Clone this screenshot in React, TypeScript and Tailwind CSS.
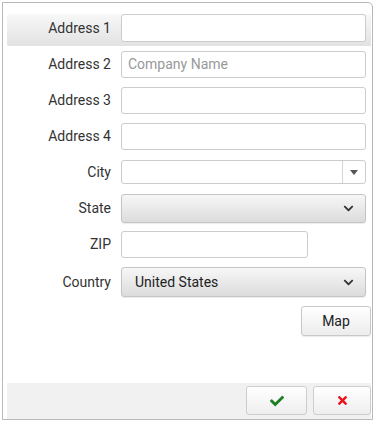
import React from "react";
import { FaCheck, FaTimes, FaChevronDown } from "react-icons/fa";

const font = { fontFamily: "Roboto, 'Liberation Sans', sans-serif" };

function Label({ children }: { children: React.ReactNode }) {
  return (
    <div className="w-[104px] shrink-0 text-right text-[14px] text-[#333] leading-none">{children}</div>
  );
}

function TextInput({ w = "w-[245px]", h = "h-[27px]", placeholder }: { w?: string; h?: string; placeholder?: string }) {
  return (
    <div className={`${w} ${h} ml-[10px] rounded-[3px] border border-[#cccccc] bg-white flex items-center px-[6px] text-[14px] text-[#999]`}>
      {placeholder}
    </div>
  );
}

function Select({ h, value }: { h: string; value?: string }) {
  return (
    <div
      className={`w-[245px] ${h} ml-[10px] rounded-[3px] border border-[#c4c4c4] bg-gradient-to-b from-[#f7f7f7] to-[#dcdcdc] flex items-center justify-between pl-[13px] pr-[11px] text-[14px] text-[#222] shadow-[0_1px_1px_rgba(0,0,0,0.08)]`}
    >
      <span>{value}</span>
      <FaChevronDown size={11} color="#333" />
    </div>
  );
}

export default function App() {
  return (
    <div className="w-[378px] h-[421px] bg-white" style={font}>
      <div className="ml-[2px] mt-[2px] w-[371px] h-[418px] border border-[#b8b8b8] rounded-tr-[5px] flex flex-col pl-[4px] pr-[1px] pt-[11px]">
        <div className="h-[32px] flex items-start bg-gradient-to-b from-[#f8f8f8] to-[#e2e2e2] rounded-l-[2px]">
          <div className="h-[28px] flex items-center">
            <Label>Address 1</Label>
          </div>
          <TextInput h="h-[28px]" />
        </div>
        <div className="h-[36px] flex items-center">
          <Label>Address 2</Label>
          <TextInput placeholder="Company Name" />
        </div>
        <div className="h-[36px] flex items-center">
          <Label>Address 3</Label>
          <TextInput />
        </div>
        <div className="h-[36px] flex items-center">
          <Label>Address 4</Label>
          <TextInput />
        </div>
        <div className="h-[36px] flex items-center">
          <Label>City</Label>
          <div className="w-[245px] h-[24px] ml-[10px] rounded-[3px] border border-[#cccccc] bg-white flex justify-end">
            <div className="w-[23px] h-full border-l border-[#d4d4d4] flex items-center justify-center">
              <svg width="8" height="5" viewBox="0 0 8 5">
                <path d="M0 0 L8 0 L4 5 Z" fill="#555" />
              </svg>
            </div>
          </div>
        </div>
        <div className="h-[36px] flex items-center">
          <Label>State</Label>
          <Select h="h-[29px]" />
        </div>
        <div className="h-[36px] flex items-center">
          <Label>ZIP</Label>
          <TextInput w="w-[187px]" />
        </div>
        <div className="h-[40px] flex items-center">
          <Label>Country</Label>
          <Select h="h-[30px]" value="United States" />
        </div>
        <div className="flex justify-end mt-[4px]">
          <div className="w-[70px] h-[30px] rounded-[3px] border border-[#c8c8c8] bg-gradient-to-b from-white to-[#ececec] flex items-center justify-center text-[14px] text-[#222] shadow-[0_1px_1px_rgba(0,0,0,0.08)]">
            Map
          </div>
        </div>
        <div className="mt-auto h-[36px] bg-[#f1f1f1] flex items-start justify-end gap-[6px] pt-[3px]">
          <div className="w-[61px] h-[29px] rounded-[3px] border border-[#cdcdcd] bg-gradient-to-b from-white to-[#eeeeee] flex items-center justify-center">
            <FaCheck size={14} color="#1a7f1f" />
          </div>
          <div className="w-[58px] h-[29px] rounded-[3px] border border-[#cdcdcd] bg-gradient-to-b from-white to-[#eeeeee] flex items-center justify-center">
            <FaTimes size={13} color="#e8141b" />
          </div>
        </div>
      </div>
    </div>
  );
}
